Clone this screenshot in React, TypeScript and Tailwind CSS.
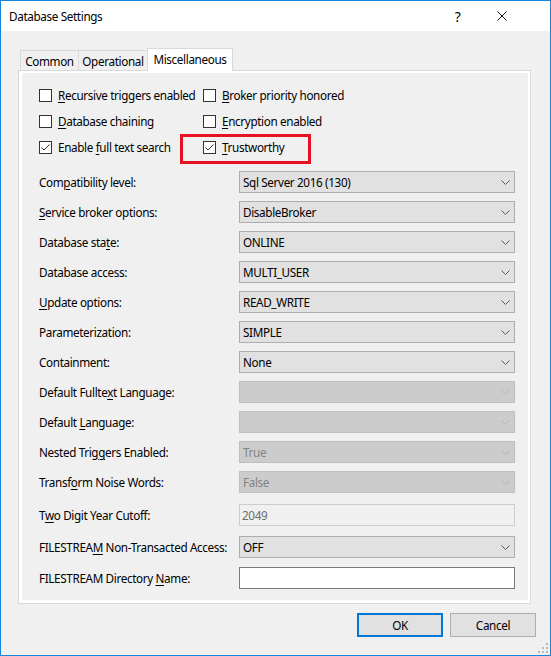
import React from "react";

function L({ t }: { t: string }) {
  const i = t.indexOf("&");
  if (i < 0) return <>{t}</>;
  return (
    <>
      {t.slice(0, i)}
      <span className="underline underline-offset-[2px] decoration-1">{t[i + 1]}</span>
      {t.slice(i + 2)}
    </>
  );
}

function Chevron({ disabled }: { disabled?: boolean }) {
  return (
    <svg width="9" height="5" viewBox="0 0 9 5">
      <path d="M0.5 0.5 L4.5 4.5 L8.5 0.5" fill="none" stroke={disabled ? "#b4b4b4" : "#5a5a5a"} strokeWidth="1" />
    </svg>
  );
}

function Check({ checked, label }: { checked?: boolean; label: string }) {
  return (
    <div className="flex items-center gap-[6px] h-[26px]">
      <div className="w-[13px] h-[13px] border border-[#333333] bg-white flex items-center justify-center">
        {checked && (
          <svg width="11" height="11" viewBox="0 0 11 11">
            <path d="M1.5 5.5 L4 8 L9.5 2.5" fill="none" stroke="#333333" strokeWidth="1" />
          </svg>
        )}
      </div>
      <span className="whitespace-nowrap pt-[1px]">
        <L t={label} />
      </span>
    </div>
  );
}

type Row = { label: string; kind: "combo" | "disabled" | "text" | "input"; value?: string; h: string };

const rows: Row[] = [
  { label: "Com&patibility level:", kind: "combo", value: "Sql Server 2016 (130)", h: "h-[30px]" },
  { label: "&Service broker options:", kind: "combo", value: "DisableBroker", h: "h-[30px]" },
  { label: "Database sta&te:", kind: "combo", value: "ONLINE", h: "h-[30px]" },
  { label: "Database access:", kind: "combo", value: "MULTI_USER", h: "h-[30px]" },
  { label: "&Update options:", kind: "combo", value: "READ_WRITE", h: "h-[30px]" },
  { label: "Parameterization:", kind: "combo", value: "SIMPLE", h: "h-[30px]" },
  { label: "Containment:", kind: "combo", value: "None", h: "h-[30px]" },
  { label: "Default Fullte&xt Language:", kind: "disabled", value: "", h: "h-[30px]" },
  { label: "Default &Language:", kind: "disabled", value: "", h: "h-[30px]" },
  { label: "Nested Trig&gers Enabled:", kind: "disabled", value: "True", h: "h-[30px]" },
  { label: "Transf&orm Noise Words:", kind: "disabled", value: "False", h: "h-[30px]" },
  { label: "T&wo Digit Year Cutoff:", kind: "text", value: "2049", h: "h-[36px]" },
  { label: "FILESTREA&M Non-Transacted Access:", kind: "combo", value: "OFF", h: "h-[28px]" },
  { label: "FILESTREAM Directory &Name:", kind: "input", value: "", h: "h-[34px]" },
];

function Control({ r }: { r: Row }) {
  if (r.kind === "combo")
    return (
      <div className="w-[276px] h-[22px] border border-[#adadad] bg-[#e1e1e1] flex items-center justify-between pl-[3px] pr-[4px]">
        <span className="pt-[2px]">{r.value}</span>
        <Chevron />
      </div>
    );
  if (r.kind === "disabled")
    return (
      <div className="w-[276px] h-[22px] border border-[#bfbfbf] bg-[#cccccc] flex items-center justify-between pl-[3px] pr-[4px] text-[#838383]">
        <span className="pt-[2px]">{r.value}</span>
        <Chevron disabled />
      </div>
    );
  if (r.kind === "text")
    return (
      <div className="w-[276px] h-[22px] border border-[#cccccc] bg-[#f0f0f0] flex items-center pl-[2px] text-[#6d6d6d]">
        <span className="pt-[2px]">{r.value}</span>
      </div>
    );
  return <div className="w-[276px] h-[22px] border border-[#7a7a7a] bg-white" />;
}

export default function App() {
  return (
    <div className="relative w-[551px] h-[656px] border border-[#1883d7] bg-[#f0f0f0] text-[11.7px] leading-none tracking-[-0.35px] text-black font-['Noto_Sans',sans-serif] box-border overflow-hidden">
      {/* Title bar */}
      <div className="h-[30px] bg-white flex items-center justify-between">
        <span className="pl-[8px] pt-[1px]">Database Settings</span>
        <div className="flex items-center mr-[27px]">
          <div className="w-[43px] flex justify-center text-[14px] pt-[1px] pr-[2px]">?</div>
          <div className="w-[43px] flex justify-center">
            <svg width="10" height="10" viewBox="0 0 10 10">
              <path d="M0.5 0.5 L9.5 9.5 M9.5 0.5 L0.5 9.5" stroke="#111" strokeWidth="1" />
            </svg>
          </div>
        </div>
      </div>

      {/* Tabs */}
      <div className="mt-[17px] ml-[19px] flex items-end h-[22px]">
        <div className="w-[58px] h-[20px] border-l border-t border-[#d9d9d9] bg-[#f0f0f0] flex items-center justify-center pt-[3px]">
          Common
        </div>
        <div className="w-[69px] h-[20px] border-l border-t border-[#d9d9d9] bg-[#f0f0f0] flex items-center justify-center pt-[3px]">
          Operational
        </div>
        <div className="relative z-10 w-[86px] h-[23px] -mb-[1px] border-l border-t border-r border-[#d9d9d9] bg-white flex items-start justify-center pt-[5px]">
          Miscellaneous
        </div>
      </div>

      {/* Panel */}
      <div className="ml-[17px] w-[513px] h-[534px] border border-[#d9d9d9] bg-white pt-[2px] pl-[3px] pr-[2px] pb-[3px] flex">
        <div className="flex-1 bg-[#f0f0f0] pt-[9px] pl-[17px]">
          <div className="grid grid-cols-[164px_auto]">
            <Check label="&Recursive triggers enabled" />
            <Check label="&Broker priority honored" />
            <Check label="&Database chaining" />
            <Check label="&Encryption enabled" />
            <Check checked label="Enable &full text search" />
            <Check checked label="&Trustworthy" />
          </div>
          <div className="mt-[7px] flex flex-col">
            {rows.map((r) => (
              <div key={r.label} className={`${r.h} flex items-center`}>
                <div className="w-[200px] whitespace-nowrap pt-[2px]">
                  <L t={r.label} />
                </div>
                <Control r={r} />
              </div>
            ))}
          </div>
        </div>
      </div>

      {/* Buttons */}
      <div className="mt-[9px] flex justify-end gap-[7px] pr-[14px]">
        <div className="w-[86px] h-[24px] border-2 border-[#0078d7] bg-[#e1e1e1] flex items-center justify-center pt-[2px]">
          OK
        </div>
        <div className="w-[86px] h-[24px] border border-[#adadad] bg-[#e1e1e1] flex items-center justify-center pt-[2px]">
          Cancel
        </div>
      </div>

      {/* Red annotation */}
      <div className="absolute left-[179px] top-[133px] w-[131px] h-[30px] border-[3px] border-[#e81123]" />

      {/* Grip */}
      <svg className="absolute right-[1px] bottom-[1px]" width="12" height="12" viewBox="0 0 12 12">
        <rect x="9" y="1" width="2" height="2" fill="#b8b8b8" />
        <rect x="5" y="5" width="2" height="2" fill="#b8b8b8" />
        <rect x="9" y="5" width="2" height="2" fill="#b8b8b8" />
        <rect x="1" y="9" width="2" height="2" fill="#b8b8b8" />
        <rect x="5" y="9" width="2" height="2" fill="#b8b8b8" />
        <rect x="9" y="9" width="2" height="2" fill="#b8b8b8" />
      </svg>
    </div>
  );
}
